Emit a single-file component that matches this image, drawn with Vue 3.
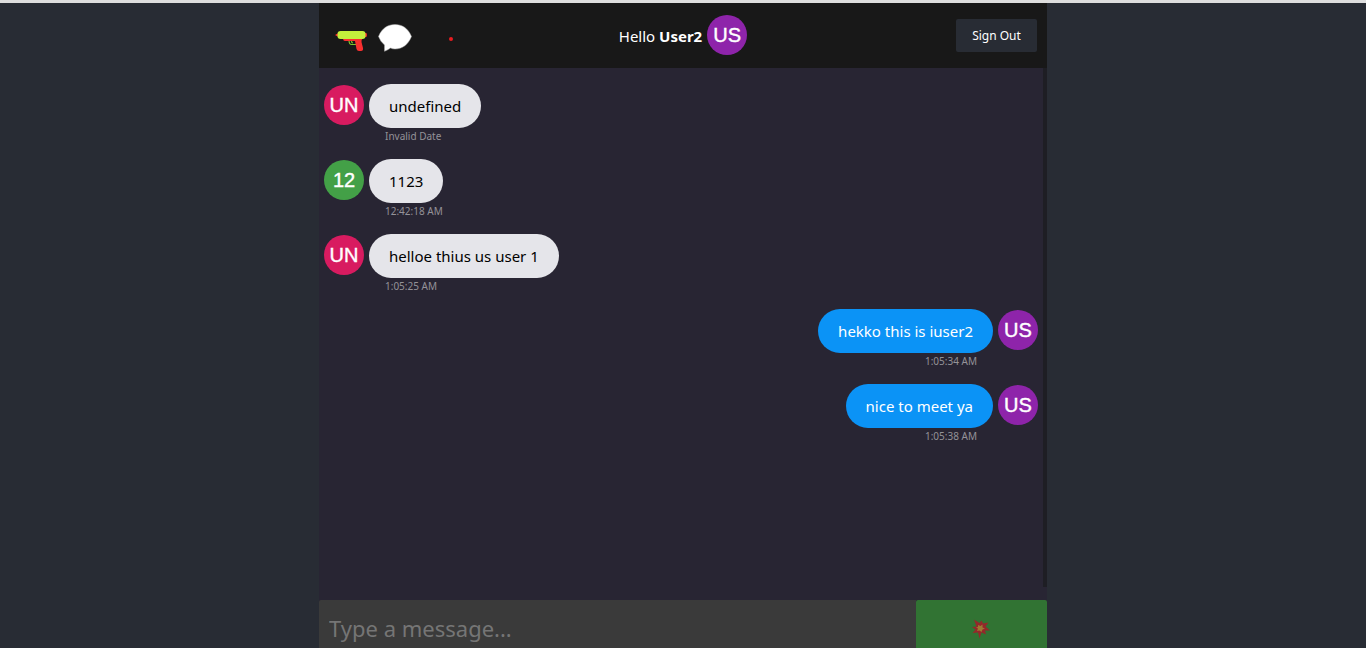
<script setup>
import { ref } from 'vue'

const draft = ref('')
const messages = [
  { id: 1, initials: 'UN', tone: 'pink', text: 'undefined', time: 'Invalid Date', sent: false },
  { id: 2, initials: '12', tone: 'green', text: '1123', time: '12:42:18 AM', sent: false },
  { id: 3, initials: 'UN', tone: 'pink', text: 'helloe thius us user 1', time: '1:05:25 AM', sent: false },
  { id: 4, initials: 'US', tone: 'purple', text: 'hekko this is iuser2', time: '1:05:34 AM', sent: true },
  { id: 5, initials: 'US', tone: 'purple', text: 'nice to meet ya', time: '1:05:38 AM', sent: true }
]
</script>

<template>
  <div class="page">
    <div class="chat">
      <header class="bar">
        <div class="logo">
          <svg class="pistol" viewBox="0 0 34 24" aria-hidden="true">
            <path d="M0.5 5.5L4 4V8L0.500 6.500ZM29 4h2q1 0 1 2t-1 2h-2z" fill="#f92f2f" />
            <path d="M14 11q0 4.500 2.500 4.500H21M16.500 12q0 2 1.500 2" fill="none" stroke="#7cc52c" stroke-width="1.200" />
            <path d="M8 9h20q-2 2-1.500 4l1.500 6q.5 3-2 3h-2q-2 0-2.500-2L20 12H10q-2 0-2-3z" fill="#f92f2f" />
            <rect x="2.500" y="2" width="28" height="8" rx="3" fill="#c3ef3c" />
          </svg>
          <svg class="balloon" viewBox="0 0 34 28" aria-hidden="true">
            <path d="M17 .5C24 .5 30 4 33.500 12.500C30 21 24 25 17 25Q14.500 25 12.500 24Q10 26 6.500 27.300V21Q2.500 18 .5 12.500C4 4 10 .5 17 .5Z" fill="#fff" stroke="#aaa" stroke-width=".5" />
          </svg>
          <span class="dot"></span>
        </div>
        <div class="greeting">
          <span>Hello <strong>User2</strong></span>
          <span class="avatar purple">US</span>
        </div>
        <button class="sign-out" type="button">Sign Out</button>
      </header>

      <main class="messages">
        <article v-for="m in messages" :key="m.id" class="message" :class="{ sent: m.sent }">
          <span class="avatar" :class="m.tone">{{ m.initials }}</span>
          <div class="body">
            <p class="bubble">{{ m.text }}</p>
            <time class="time">{{ m.time }}</time>
          </div>
        </article>
      </main>

      <form class="composer" @submit.prevent>
        <input v-model="draft" class="field" type="text" placeholder="Type a message..." aria-label="Message" />
        <button class="send" type="submit" disabled aria-label="Send">
          <svg class="burst" viewBox="0 0 18 20" aria-hidden="true">
            <path d="M2 .5L7.500 4L9.500 1.500L11 4.500L16.500 3.500L13.500 7.500L18 11.500L13 11.500L14 15.500L9.500 13.500L7.500 19.500L6 13.500L.5 14L3.500 10.500L0 8L4.500 7.500Z" fill="#94282a" />
            <path d="M6 6L8.500 7L10.500 5.500L10.500 8.500L13 9.500L10.500 10.500L9.500 13L7.500 11.500L5 12L6 9.500L4 8.500L6 8Z" fill="#9c7832" />
          </svg>
        </button>
      </form>
    </div>
  </div>
</template>

<style>
body {
  margin: 0;
  background: #282c34;
}
</style>

<style scoped>
.page {
  box-sizing: border-box;
  height: 100vh;
  border-top: 3px solid #dedede;
  background: #282c34;
  font-family: "Segoe UI", "Noto Sans", "Open Sans", sans-serif;
}

.chat {
  display: flex;
  flex-direction: column;
  height: 100%;
  max-width: 728px;
  margin: 0 auto;
  background: #282533;
}

.bar {
  display: grid;
  grid-template-columns: 1fr auto 1fr;
  align-items: center;
  box-sizing: border-box;
  flex: none;
  height: 65px;
  padding: 0 10px;
  background: #181818;
  color: #fff;
}

.logo {
  display: flex;
  align-items: center;
  gap: 9px;
  padding-left: 6px;
}

.pistol {
  width: 34px;
  height: 24px;
  margin-top: 10px;
}

.balloon {
  width: 34px;
  height: 28px;
  margin-top: 4px;
}

.dot {
  width: 4px;
  height: 4px;
  margin: 6px 0 0 28px;
  border-radius: 50%;
  background: #ea1c20;
}

.greeting {
  display: flex;
  align-items: center;
  gap: 5px;
  font-size: 15px;
}

.greeting .avatar {
  margin-bottom: 2px;
}

.avatar {
  display: flex;
  flex: none;
  align-items: center;
  justify-content: center;
  width: 40px;
  height: 40px;
  border-radius: 50%;
  color: #fff;
  font: 20px/40px "Liberation Sans", Arial, sans-serif;
  -webkit-text-stroke: 0.4px #fff;
}

.pink {
  background: #d81b60;
}

.green {
  background: #43a047;
}

.purple {
  background: #8e24aa;
}

.sign-out {
  justify-self: end;
  width: 81px;
  height: 33px;
  padding: 0;
  border: 0;
  border-radius: 2px;
  background: #282c34;
  color: #fff;
  font-family: inherit;
  font-size: 12px;
}

.messages {
  display: flex;
  flex: 1;
  flex-direction: column;
  gap: 15px;
  min-height: 0;
  margin-bottom: 13px;
  padding: 16px 5px 0;
  box-sizing: border-box;
  border-right: 4px solid #1e1e24;
  overflow: hidden;
}

.message {
  display: flex;
  align-items: flex-start;
  gap: 5px;
}

.message .avatar {
  margin-top: 1px;
}

.sent {
  flex-direction: row-reverse;
}

.body {
  display: flex;
  flex-direction: column;
  align-items: flex-start;
}

.sent .body {
  align-items: flex-end;
}

.bubble {
  margin: 0;
  padding: 10px 20px;
  border-radius: 25px;
  background: #e5e5ea;
  color: #000;
  font-size: 15px;
  line-height: 24px;
}

.sent .bubble {
  background: #0b93f6;
  color: #fff;
}

.time {
  margin: 0 16px;
  color: #949298;
  font-size: 10px;
  line-height: 16px;
}

.composer {
  display: flex;
  flex: none;
  height: 48px;
}

.field {
  flex: 1;
  box-sizing: border-box;
  min-width: 0;
  padding: 8px 10px 0;
  border: 0;
  border-radius: 2px 0 0;
  outline: none;
  background: #3a3a3a;
  color: #fff;
  font-family: inherit;
  font-size: 22px;
}

.field::placeholder {
  color: #757575;
}

.send {
  display: flex;
  align-items: center;
  justify-content: center;
  width: 18%;
  padding: 10px 0 0;
  border: 0;
  border-radius: 2px 2px 0 0;
  background: #317333;
}

.burst {
  width: 18px;
  height: 20px;
}
</style>
